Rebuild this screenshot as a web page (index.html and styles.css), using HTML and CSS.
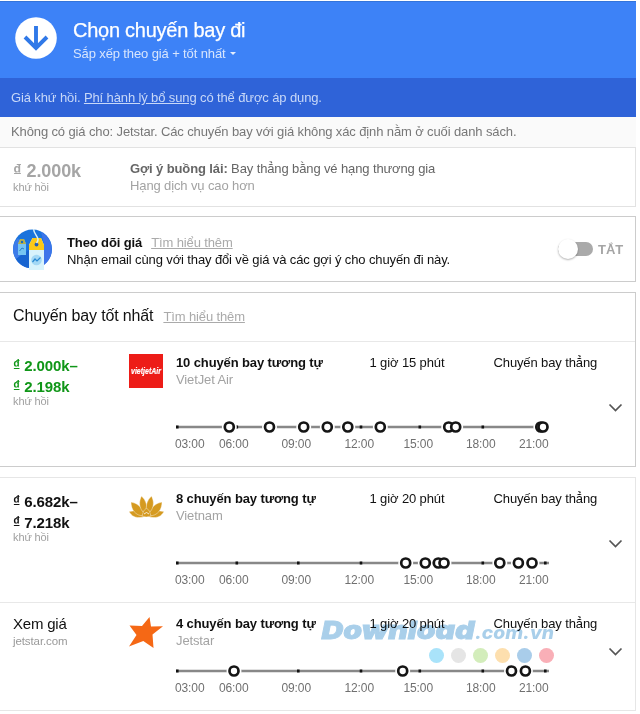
FILE: index.html
```html
<!DOCTYPE html>
<html lang="vi">
<head>
<meta charset="utf-8">
<title>Chọn chuyến bay đi</title>
<link rel="stylesheet" href="styles.css">
</head>
<body>
<svg class="defs" width="0" height="0" aria-hidden="true">
  <defs>
    <g id="axis">
      <path d="M0 8H373" stroke="#888" stroke-width="2.6"/>
      <path d="M0 8h2.6M59.5 8h2.6M121 8h2.6M183.700 8h2.600M242.500 8h2.600M305.500 8h2.600M368 8h2.600" stroke="#111" stroke-width="2.8"/>
    </g>
    <circle id="halo" r="7.500" fill="#fff"/>
    <circle id="ring" r="4.500" fill="#fff" stroke="#151515" stroke-width="2.700"/>
    <g id="dot"><use href="#halo"/><use href="#ring"/></g>
    <path id="chevron" d="M1.500 1.500L7.500 7.500L13.500 1.500" fill="none" stroke="#555" stroke-width="1.700"/>
  </defs>
</svg>
<main class="page">
  <header class="header">
    <svg class="header-icon" viewBox="0 0 42 42"><circle cx="21" cy="21" r="20.800" fill="#fff"/><path d="M21 9V32M10 20L21 31L32 20" fill="none" stroke="#3079e8" stroke-width="3.900"/></svg>
    <div class="header-text">
      <h1 class="title">Chọn chuyến bay đi</h1>
      <div class="sort"><span class="sort-label">Sắp xếp theo giá + tốt nhất</span><span class="caret"></span></div>
    </div>
  </header>
  <div class="fees"><span>Giá khứ hồi. <a>Phí hành lý bổ sung</a> có thể được áp dụng.</span></div>
  <div class="notice"><span>Không có giá cho: Jetstar. Các chuyến bay với giá không xác định nằm ở cuối danh sách.</span></div>

  <section class="card tip">
    <div class="tip-price"><div class="tip-amount"><span class="dong">₫</span> 2.000k</div><div class="small">khứ hồi</div></div>
    <div class="tip-text"><div class="tip-main"><b>Gợi ý buồng lái:</b> Bay thẳng bằng vé hạng thương gia</div><div class="tip-sub">Hạng dịch vụ cao hơn</div></div>
  </section>

  <section class="card track">
    <svg class="track-icon" viewBox="0 0 40 42">
      <circle cx="19.500" cy="20" r="19.500" fill="#1a73dc"/>
      <path d="M0 20A19.500 19.500 0 0 0 16 39V27L5 9Q0 14 0 20Z" fill="#3c7be9"/>
      <path d="M8 26L16 21V39A19.500 19.500 0 0 1 3 30Z" fill="#1764d0"/>
      <path d="M28 3A19.500 19.500 0 0 1 31 36V15Z" fill="#3d74ea"/>
      <path d="M5 15L7 10H11L13 15V26H5Z" fill="#76c5f2"/><path d="M5 15L7 10H11L13 15Z" fill="#b4b04c"/><circle cx="9" cy="13" r="1.200" fill="#176bc0"/>
      <path d="M6.500 22L9 19L11 20" stroke="#2680c6" fill="none"/>
      <path d="M16 16L19.500 9H28L31 16V41H16Z" fill="#d8f3fc"/><path d="M16 16L19.500 9H28L31 16V21H16Z" fill="#fdc917"/>
      <circle cx="23.500" cy="15.500" r="1.900" fill="#295db3"/>
      <path d="M23.500 14C28 9 21 6 20.500 0" fill="none" stroke="#d7edf6" stroke-width="1.500"/>
      <circle cx="23.500" cy="31" r="5.300" fill="#a3d8f5"/><path d="M19.500 33L22 30L24 32L27.500 28.500" fill="none" stroke="#2889d3" stroke-width="1.200"/>
    </svg>
    <div class="track-text">
      <div class="track-head"><b>Theo dõi giá</b><a class="more">Tìm hiểu thêm</a></div>
      <div class="track-sub">Nhận email cùng với thay đổi về giá và các gợi ý cho chuyến đi này.</div>
    </div>
    <div class="toggle"><span class="toggle-bar"><span class="toggle-knob"></span></span><span class="toggle-label">TẮT</span></div>
  </section>

  <section class="card best">
    <div class="best-head"><h2>Chuyến bay tốt nhất</h2><a class="more">Tìm hiểu thêm</a></div>
    <article class="flight">
      <div class="price green"><div class="amount"><span class="dong">₫</span> 2.000k–</div><div class="amount"><span class="dong">₫</span> 2.198k</div><div class="small">khứ hồi</div></div>
      <div class="logo"><div class="vietjet"><svg width="34" height="34"><text x="2" y="19.500" textLength="30" lengthAdjust="spacingAndGlyphs">vietjetAir</text></svg></div></div>
      <div class="details">
        <div class="facts"><b>10 chuyến bay tương tự</b><span>1 giờ 15 phút</span><span>Chuyến bay thẳng</span></div>
        <div class="airline">VietJet Air</div>
        <svg class="timeline" width="376" height="16"><use href="#axis"/><use href="#dot" x="53.300" y="8"/><use href="#dot" x="93.500" y="8"/><use href="#dot" x="127.700" y="8"/><use href="#dot" x="151.300" y="8"/><use href="#dot" x="171.800" y="8"/><use href="#dot" x="204.300" y="8"/><use href="#halo" x="279.700" y="8"/><use href="#dot" x="272.700" y="8"/><use href="#ring" x="279.700" y="8"/><use href="#halo" x="367" y="8"/><use href="#dot" x="364.800" y="8"/><use href="#ring" x="367" y="8"/></svg>
        <div class="hours"><span>03:00</span><span>06:00</span><span>09:00</span><span>12:00</span><span>15:00</span><span>18:00</span><span>21:00</span></div>
      </div>
      <svg class="chevron" width="15" height="9"><use href="#chevron"/></svg>
    </article>
  </section>

  <section class="card others">
    <article class="flight">
      <div class="price"><div class="amount"><span class="dong">₫</span> 6.682k–</div><div class="amount"><span class="dong">₫</span> 7.218k</div><div class="small">khứ hồi</div></div>
      <div class="logo"><svg class="lotus" viewBox="0 0 35 22" width="35" height="22"><g fill="#d59a20" stroke="#fff" stroke-width=".4"><path d="M17 20.500C8 23 3 21 0 15.500Q9 13 17 20.500Z"/><path d="M18 20.500C27 23 32 21 35 15.500Q26 13 18 20.500Z"/><path d="M15 20C6 20 2 13 2 6Q13 8 16 20Z"/><path d="M20 20C29 20 33 13 33 6Q22 8 19 20Z"/><path d="M16 18C9 12 10 5 12.500 0Q20 7 17 18Z"/><path d="M19 18C26 12 25 5 22.500 0Q15 7 18 18Z"/><path d="M13 20Q14 14 17.500 12Q21 14 22 20Q17 22 13 20Z"/></g><path d="M15 18Q17.500 15 20 18" stroke="#fff" stroke-width=".8" fill="none"/></svg></div>
      <div class="details">
        <div class="facts"><b>8 chuyến bay tương tự</b><span>1 giờ 20 phút</span><span>Chuyến bay thẳng</span></div>
        <div class="airline">Vietnam</div>
        <svg class="timeline" width="376" height="16"><use href="#axis"/><use href="#dot" x="229.700" y="8"/><use href="#dot" x="249.300" y="8"/><use href="#halo" x="268" y="8"/><use href="#ring" x="262.300" y="8"/><use href="#ring" x="268" y="8"/><use href="#dot" x="323.800" y="8"/><use href="#dot" x="342.400" y="8"/><use href="#dot" x="356" y="8"/></svg>
        <div class="hours"><span>03:00</span><span>06:00</span><span>09:00</span><span>12:00</span><span>15:00</span><span>18:00</span><span>21:00</span></div>
      </div>
      <svg class="chevron" width="15" height="9"><use href="#chevron"/></svg>
    </article>
    <article class="flight compact">
      <div class="price unknown"><div class="see">Xem giá</div><div class="site">jetstar.com</div></div>
      <div class="logo"><svg class="star" viewBox="0 0 34 31" width="34" height="31"><path d="M20.500 0L22 9.500L34 9.200L23.500 17.500L24.500 31L14.300 24L0 29.500L7.500 18L0.500 8.500L13 9Z" fill="#f56815"/></svg></div>
      <div class="details">
        <div class="facts"><b>4 chuyến bay tương tự</b><span>1 giờ 20 phút</span><span>Chuyến bay thẳng</span></div>
        <div class="airline">Jetstar</div>
        <svg class="timeline" width="376" height="16"><use href="#axis"/><use href="#dot" x="58" y="8"/><use href="#dot" x="226.700" y="8"/><use href="#halo" x="349.400" y="8"/><use href="#dot" x="335.500" y="8"/><use href="#ring" x="349.400" y="8"/></svg>
        <div class="hours"><span>03:00</span><span>06:00</span><span>09:00</span><span>12:00</span><span>15:00</span><span>18:00</span><span>21:00</span></div>
      </div>
      <svg class="chevron" width="15" height="9"><use href="#chevron"/></svg>
    </article>
    <svg class="watermark" width="240" height="52">
      <text class="wm-main" x="1.500" y="25.500" textLength="153" lengthAdjust="spacingAndGlyphs">Download</text>
      <text class="wm-tail" x="155" y="25.500" textLength="79" lengthAdjust="spacingAndGlyphs">.com.vn</text>
      <circle cx="116.500" cy="42.500" r="7.500" fill="#a9e3fa"/><circle cx="138.500" cy="42.500" r="7.500" fill="#e5e5e5"/><circle cx="160.500" cy="42.500" r="7.500" fill="#d3edbb"/><circle cx="182.500" cy="42.500" r="7.500" fill="#fddfae"/><circle cx="204.500" cy="42.500" r="7.500" fill="#a9cdea"/><circle cx="226.500" cy="42.500" r="7.500" fill="#f9afb7"/>
    </svg>
  </section>
</main>
</body>
</html>
```
FILE: styles.css
```css
* { box-sizing: border-box; }
body { margin: 0; background: #fff; font-family: "Liberation Sans", Arial, sans-serif; font-size: 13px; line-height: 17px; letter-spacing: -0.12px; color: #111; }
.defs { position: absolute; }
h1, h2 { margin: 0; font-weight: normal; }
span, b, a, div { white-space: nowrap; }
.page { width: 636px; padding-top: 1px; }
.header { display: flex; height: 77px; padding: 15px 15px 0; background: #3d82f7; border-top: 1px solid #3474da; color: #fff; }
.header-icon { width: 42px; height: 42px; margin-right: 16px; }
.header-text { padding-top: 1px; }
.title { font-size: 20px; line-height: 25px; letter-spacing: -0.25px; -webkit-text-stroke: .25px #fff; }
.sort { display: flex; align-items: center; gap: 4px; line-height: 21px; color: #d7e5fd; }
.caret { border: 3.500px solid transparent; border-top-color: #e4edfd; border-bottom: 0; }
.fees { height: 39px; padding-left: 11px; background: #2f63d8; color: #c8d8f8; line-height: 39px; }
.fees a, .more { text-decoration: underline; }
.notice { height: 30px; padding-left: 11px; background: #fafafa; color: #777; line-height: 29px; }
.card { border: 1px solid #ccc; border-left: 0; }
.tip { display: flex; height: 60px; padding: 13px 0 0 13px; border-color: #e2e2e2; }
.tip-price { width: 117px; color: #a5a5a5; }
.tip-amount { font-size: 18px; line-height: 20px; font-weight: bold; letter-spacing: -0.1px; }
.tip-amount .dong { font-size: 17px; }
.small { font-size: 11px; line-height: 11px; color: #a0a0a0; }
.tip-main { line-height: 16px; color: #666; }
.tip-sub { color: #a3a3a3; }
.more { color: #aaa; }
.dong { position: relative; top: -1px; font-size: 14px; }
.track { display: flex; height: 66px; margin-top: 9px; padding: 12px 12px 0 13px; }
.track-icon { width: 40px; height: 42px; margin-right: 14px; }
.track-text { padding-top: 5px; }
.track-head { display: flex; gap: 9px; }
.track-sub { line-height: 18px; }
.toggle { display: flex; align-items: center; height: 42px; margin-left: auto; gap: 5px; margin-top: -1px; }
.toggle-bar { display: flex; align-items: center; width: 35px; height: 14px; background: #aaa; border-radius: 7px; }
.toggle-knob { width: 20px; height: 20px; background: #fff; border-radius: 50%; box-shadow: 0 1px 2px rgba(0,0,0,.3); }
.toggle-label { font-weight: bold; color: #a5a5a5; }
.best { height: 175px; margin-top: 10px; }
.best-head { display: flex; align-items: baseline; gap: 10px; height: 48px; padding: 13px 0 0 13px; }
.best-head h2 { font-size: 16px; line-height: 20px; letter-spacing: -0.15px; }
.flight { position: relative; display: grid; grid-template-columns: 116px 47px 432px 15px; height: 125px; padding-left: 13px; border-top: 1px solid #e8e8e8; }
.price { padding-top: 14px; }
.amount { font-size: 15px; line-height: 20.500px; font-weight: bold; letter-spacing: -0.08px; }
.price .small { margin-top: -1px; }
.green .amount { color: #109618; }
.logo { padding-top: 12px; }
.vietjet { width: 34px; height: 34px; background: #ed1c17; }
.vietjet text { font: italic bold 8.500px "Liberation Sans", sans-serif; letter-spacing: 0; fill: #fff; stroke: #fff; stroke-width: .2; }
.lotus { display: block; margin-top: 6px; }
.star { display: block; margin-top: 2px; }
.details { padding-top: 12px; }
.facts { display: grid; grid-template-columns: 193.500px 124px 115px; }
.airline { color: #a3a3a3; }
.timeline { display: block; margin-top: 31px; overflow: visible; }
.hours { display: grid; grid-template-columns: 44px 62.500px 63px 59px 62.500px 53px 30px; margin: 1px 0 0 -1px; font-size: 12px; line-height: 16px; color: #707070; }
.chevron { margin-top: 61px; }
.others { position: relative; margin-top: 10px; height: 234px; border-color: #e6e6e6; }
.others .flight:first-child { border-top: 0; height: 124px; }
.compact .timeline { margin-top: 14px; }
.compact .chevron { margin-top: 44px; }
.compact.flight { height: 108px; }
.compact .price { padding-top: 12px; }
.see { font-size: 15px; line-height: 18px; letter-spacing: -0.2px; }
.site { font-size: 11.500px; line-height: 16px; letter-spacing: -0.1px; color: #999; }
.watermark { position: absolute; left: 320px; top: 135px; mix-blend-mode: multiply; letter-spacing: 0; }
.wm-main { font: italic 900 25px Inter, sans-serif; fill: #a9cfea; stroke: #a9cfea; stroke-width: .8; }
.wm-tail { font: italic 800 18px Inter, sans-serif; fill: #a9cfea; }
```
